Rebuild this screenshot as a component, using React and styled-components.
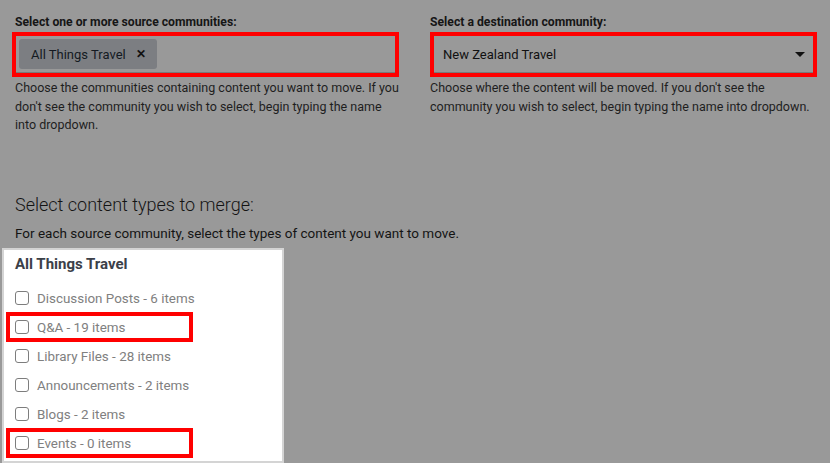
import React from 'react';
import styled, { createGlobalStyle } from 'styled-components';

const GlobalStyle = createGlobalStyle`
  html, body {
    margin: 0;
    padding: 0;
    background: #999999;
    font-family: Roboto, "Liberation Sans", Arial, sans-serif;
    color: #1c1c1c;
  }
  *, *::before, *::after { box-sizing: border-box; }
`;

const Page = styled.div`
  width: 830px;
  height: 463px;
  overflow: hidden;
  background: #999999;
  padding: 15px 13px 0 15px;
`;

const FieldRow = styled.div`
  display: grid;
  grid-template-columns: 384px 387px;
  column-gap: 31px;
`;

const Column = styled.div`
  display: flex;
  flex-direction: column;
`;

const Label = styled.label`
  font-size: 12.2px;
  font-weight: 700;
  line-height: 15px;
  color: #161616;
  margin-bottom: 2px;
`;

const Field = styled.div`
  height: 45px;
  border: 4px solid #ff0000;
  margin-left: ${p => p.$shift || 0}px;
  background: #999999;
`;

const Control = styled.div`
  height: 100%;
  display: flex;
  align-items: center;
  border-bottom: 1px solid #7a7a7a;
  padding: ${p => p.$pad || '0 3px'};
  justify-content: ${p => p.$between ? 'space-between' : 'flex-start'};
  font-size: 13px;
  color: #111;
`;

const Tag = styled.span`
  display: inline-flex;
  align-items: center;
  gap: 10px;
  height: 30px;
  padding: 0 11px 0 12px;
  background: #7c7e82;
  border-radius: 3px;
  font-size: 13px;
  color: #141a22;
`;

const Remove = styled.span`
  font-size: 12px;
  font-weight: 700;
  color: #111;
`;

const Caret = styled.span`
  width: 0;
  height: 0;
  border-left: 5px solid transparent;
  border-right: 5px solid transparent;
  border-top: 5px solid #111;
  margin-right: 1px;
`;

const Help = styled.p`
  margin: 2px 0 0;
  font-size: 12.5px;
  line-height: 18.5px;
  color: #1e1e1e;
`;

const Section = styled.div`
  margin-top: 59px;
`;

const Heading = styled.h2`
  margin: 0;
  font-size: 18px;
  font-weight: 300;
  line-height: 22px;
  color: #141414;
`;

const Intro = styled.p`
  margin: 8px 0 0;
  font-size: 13.5px;
  line-height: 18px;
  color: #141414;
`;

const Panel = styled.div`
  margin: 6px 0 0 -13px;
  width: 282px;
  background: #ffffff;
  border: 2px solid #d4d4d4;
  padding: 5px 12px 3px 11px;
`;

const PanelTitle = styled.div`
  font-size: 15px;
  font-weight: 700;
  line-height: 18px;
  color: #3b4048;
  margin-bottom: 11px;
`;

const List = styled.div`
  display: flex;
  flex-direction: column;
`;

const Item = styled.label`
  position: relative;
  display: flex;
  align-items: center;
  gap: 8px;
  height: 29px;
  font-size: 13.4px;
  color: #808080;

  &::after {
    content: '';
    display: ${p => p.$highlight ? 'block' : 'none'};
    position: absolute;
    left: -9px;
    top: -1px;
    width: 187px;
    height: 30px;
    border: 4px solid #ff0000;
  }
`;

const Box = styled.span`
  width: 14px;
  height: 14px;
  border: 1px solid #7d7d7d;
  border-radius: 3px;
  background: #fff;
  flex-shrink: 0;
`;

const items = [
  { label: 'Discussion Posts - 6 items' },
  { label: 'Q&A - 19 items', highlight: true },
  { label: 'Library Files - 28 items' },
  { label: 'Announcements - 2 items' },
  { label: 'Blogs - 2 items' },
  { label: 'Events - 0 items', highlight: true },
];

export default function App() {
  return (
    <>
      <GlobalStyle />
      <Page>
        <FieldRow>
          <Column>
            <Label>Select one or more source communities:</Label>
            <Field $shift={-3}>
              <Control>
                <Tag>All Things Travel <Remove>✕</Remove></Tag>
              </Control>
            </Field>
            <Help>
              Choose the communities containing content you want to move. If you don't see the community you wish to select, begin typing the name into dropdown.
            </Help>
          </Column>
          <Column>
            <Label>Select a destination community:</Label>
            <Field>
              <Control $pad="0 7px 0 9px" $between>
                <span>New Zealand Travel</span>
                <Caret />
              </Control>
            </Field>
            <Help>
              Choose where the content will be moved. If you don't see the community you wish to select, begin typing the name into dropdown.
            </Help>
          </Column>
        </FieldRow>

        <Section>
          <Heading>Select content types to merge:</Heading>
          <Intro>For each source community, select the types of content you want to move.</Intro>
          <Panel>
            <PanelTitle>All Things Travel</PanelTitle>
            <List>
              {items.map(it => (
                <Item key={it.label} $highlight={it.highlight}>
                  <Box />
                  {it.label}
                </Item>
              ))}
            </List>
          </Panel>
        </Section>
      </Page>
    </>
  );
}
